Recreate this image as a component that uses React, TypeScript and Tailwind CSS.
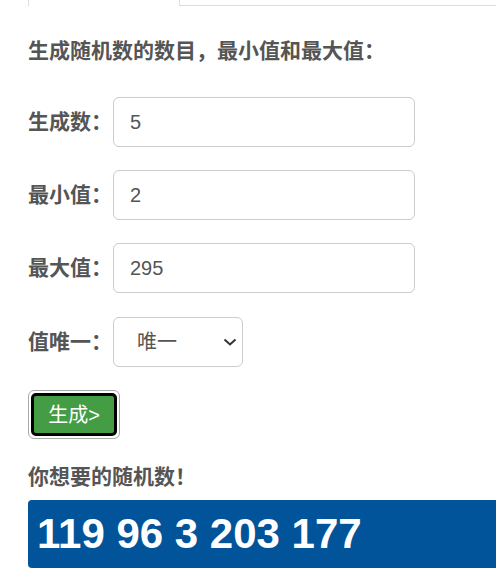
import React from "react";

const cjk = { fontFamily: '"Liberation Sans", "Noto Sans CJK SC", sans-serif' };

function Row({ label, value, mt }: { label: string; value: string; mt: string }) {
  return (
    <div className={`flex items-center h-[50px] ${mt}`}>
      <div className="w-[85px] text-[21px] font-bold text-[#555] leading-[28px]">{label}</div>
      <input
        readOnly
        value={value}
        className="w-[302px] h-[50px] border border-[#ccc] rounded-[6px] pl-4 text-[20px] text-[#555] outline-none bg-white"
        style={cjk}
      />
    </div>
  );
}

export default function App() {
  return (
    <div className="w-[496px] h-[587px] overflow-hidden bg-white" style={cjk}>
      <div className="flex h-[6px]">
        <div className="w-[28px] border-b border-transparent" />
        <div className="w-[152px] border-l border-r border-[#ddd]" />
        <div className="flex-1 border-b border-[#ddd]" />
      </div>
      <div className="pl-[28px]">
        <div className="mt-[31px] text-[21px] font-bold text-[#555] leading-[28px] whitespace-nowrap">
          生成随机数的数目，最小值和最大值：
        </div>
        <Row label="生成数：" value="5" mt="mt-[32px]" />
        <Row label="最小值：" value="2" mt="mt-[23px]" />
        <Row label="最大值：" value="295" mt="mt-[23px]" />
        <div className="flex items-center h-[50px] mt-[24px]">
          <div className="w-[85px] text-[21px] font-bold text-[#555] leading-[28px]">值唯一：</div>
          <div className="relative">
            <select
              className="appearance-none w-[130px] h-[50px] border border-[#ccc] rounded-[6px] pl-[23px] text-[20px] text-[#555] bg-white outline-none"
              style={cjk}
              defaultValue="1"
            >
              <option value="1">唯一</option>
            </select>
            <svg
              className="absolute right-[6px] top-[21px] pointer-events-none"
              width="14"
              height="8"
              viewBox="0 0 14 8"
            >
              <path d="M1.5 1.5 L7 6.5 L12.5 1.5" fill="none" stroke="#333" strokeWidth="2" />
            </svg>
          </div>
        </div>
        <div className="mt-[23px] w-[92px] h-[49px] border border-[#aaa] rounded-[6px] p-[2px]">
          <button
            className="w-full h-full bg-[#449d44] border-[3px] border-black rounded-[5px] text-white text-[20px] leading-none flex items-center justify-center"
            style={cjk}
          >
            生成&gt;
          </button>
        </div>
        <div className="mt-[24px] text-[21px] font-bold text-[#555] leading-[28px]">你想要的随机数！</div>
        <div className="mt-[9px] w-[520px] h-[68px] bg-[#02549a] rounded-[4px] flex items-center pl-[9px]">
          <span className="text-white font-bold text-[42px] leading-none" style={{ fontFamily: '"Liberation Sans", Arial, sans-serif' }}>
            119 96 3 203 177
          </span>
        </div>
      </div>
    </div>
  );
}
